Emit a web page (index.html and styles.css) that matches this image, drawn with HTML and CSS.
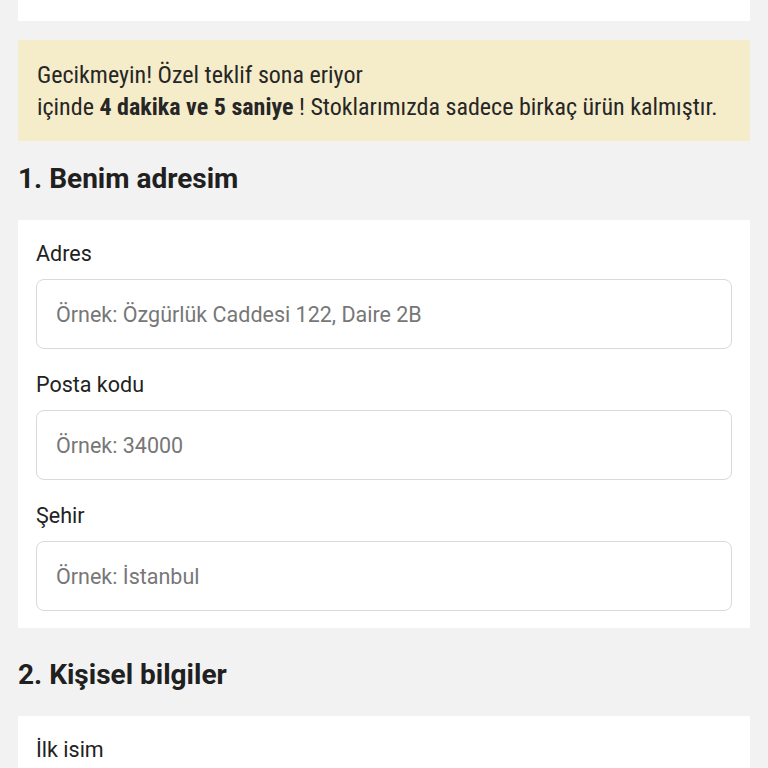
FILE: index.html
```html
<!DOCTYPE html>
<html lang="tr">
<head>
<meta charset="utf-8">
<title>Sipariş</title>
<link rel="stylesheet" href="styles.css">
</head>
<body>
<main class="page">
  <div class="card card-top"></div>

  <div class="banner">
    <p class="banner-line">Gecikmeyin! Özel teklif sona eriyor</p>
    <p class="banner-line">içinde <strong>4 dakika ve 5 saniye</strong> ! Stoklarımızda sadece birkaç ürün kalmıştır.</p>
  </div>

  <h2 class="section-title section-title-first">1. Benim adresim</h2>
  <section class="card form-card">
    <div class="field">
      <label class="field-label" for="adres">Adres</label>
      <input class="field-input" id="adres" type="text" placeholder="Örnek: Özgürlük Caddesi 122, Daire 2B">
    </div>
    <div class="field">
      <label class="field-label" for="posta">Posta kodu</label>
      <input class="field-input" id="posta" type="text" placeholder="Örnek: 34000">
    </div>
    <div class="field">
      <label class="field-label" for="sehir">Şehir</label>
      <input class="field-input" id="sehir" type="text" placeholder="Örnek: İstanbul">
    </div>
  </section>

  <h2 class="section-title section-title-next">2. Kişisel bilgiler</h2>
  <section class="card form-card">
    <div class="field">
      <label class="field-label" for="isim">İlk isim</label>
      <input class="field-input" id="isim" type="text" placeholder="Örnek: Ahmet">
    </div>
  </section>
</main>
</body>
</html>
```

FILE: styles.css
```css
html, body {
  margin: 0;
  padding: 0;
  background: #f2f2f2;
}

body {
  font-family: Roboto, "Noto Sans", sans-serif;
  color: #222222;
}

.page {
  padding: 0 18px;
  display: flex;
  flex-direction: column;
}

.card {
  background: #ffffff;
}

.card-top {
  height: 21px;
  margin-bottom: 19px;
}

.banner {
  background: #f5ecc9;
  padding: 19px 18px 18px 19px;
}

.banner-line {
  margin: 0;
  font-family: "Roboto Condensed", "Liberation Sans Narrow", Roboto, sans-serif;
  font-size: 24px;
  line-height: 32px;
  color: #262626;
  white-space: nowrap;
}

.banner-line strong {
  font-weight: 700;
}

.section-title {
  margin: 0;
  font-size: 28px;
  line-height: 36px;
  font-weight: 700;
  color: #202020;
}

.section-title-first {
  margin-top: 20px;
  margin-bottom: 23px;
}

.section-title-next {
  margin-top: 29px;
  margin-bottom: 23px;
}

.form-card {
  padding: 20px 18px 17px;
  display: flex;
  flex-direction: column;
  gap: 22px;
}

.field {
  display: flex;
  flex-direction: column;
}

.field-label {
  font-size: 21.5px;
  line-height: 28px;
  color: #222222;
  margin-bottom: 11px;
}

.field-input {
  box-sizing: border-box;
  height: 70px;
  width: 100%;
  border: 1px solid #d9d9d9;
  border-radius: 8px;
  padding: 0 19px;
  font-family: Roboto, "Noto Sans", sans-serif;
  font-size: 21.5px;
  color: #222222;
  background: #ffffff;
  outline: none;
}

.field-input::placeholder {
  color: #777777;
}
```
